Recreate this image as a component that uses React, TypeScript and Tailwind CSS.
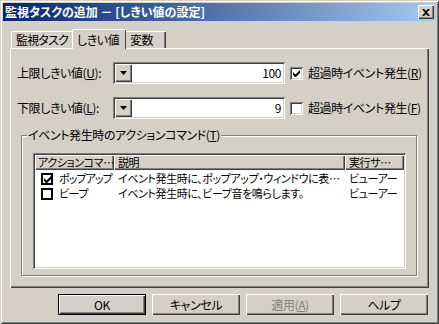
import React from 'react';

const FONT = { fontFamily: '"MS UI Gothic", "Noto Sans CJK JP", sans-serif' };

const raised = 'shadow-[inset_1px_1px_0_#ffffff,inset_-1px_-1px_0_#404040,inset_-2px_-2px_0_#808080]';
const sunken = 'shadow-[inset_1px_1px_0_#808080,inset_-1px_-1px_0_#ffffff,inset_2px_2px_0_#404040,inset_-2px_-2px_0_#d4d0c8]';

const Check: React.FC<{ checked?: boolean }> = ({ checked }) => (
  <div className={`w-[13px] h-[13px] bg-white shrink-0 relative ${sunken}`}>
    {checked && (
      <svg className="absolute left-[3px] top-[3px]" width="7" height="7" viewBox="0 0 7 7">
        <path d="M0 2v3l2 2h1l4-4V0L2.5 4.5z" fill="#000" />
      </svg>
    )}
  </div>
);

const ListCheck: React.FC<{ checked?: boolean }> = ({ checked }) => (
  <div className="w-[12px] h-[12px] bg-white border-2 border-black shrink-0 relative">
    {checked && (
      <svg className="absolute left-[1px] top-[1px]" width="7" height="7" viewBox="0 0 7 7">
        <path d="M0 2v3l2 2h1l4-4V0L2.5 4.5z" fill="#000" />
      </svg>
    )}
  </div>
);

const Combo: React.FC<{ value: string }> = ({ value }) => (
  <div className={`w-[172px] h-[22px] bg-white flex items-stretch p-[2px] shrink-0 ${sunken}`}>
    <div className={`w-[17px] bg-[#d4d0c8] flex items-center justify-center ${raised}`}>
      <svg width="7" height="4" viewBox="0 0 7 4"><path d="M0 0h7L3.5 4z" fill="#000" /></svg>
    </div>
    <div className="flex-1 text-right pr-[2px] leading-[18px] text-[12px]">{value}</div>
  </div>
);

const Btn: React.FC<{ label: React.ReactNode; def?: boolean; disabled?: boolean }> = ({ label, def, disabled }) => (
  <div className={`w-[88px] h-[21px] ${def ? 'border border-black' : ''}`}>
    <div
      className={`w-full h-full flex items-center justify-center text-[12px] ${raised} ${
        disabled ? 'text-[#808080]' : 'text-black'
      }`}
    >
      {label}
    </div>
  </div>
);

export default function App() {
  return (
    <div
      style={FONT}
      className="w-[439px] h-[324px] bg-[#d4d0c8] p-[3px] flex flex-col text-black whitespace-nowrap tracking-[-0.4px] [font-feature-settings:'palt'] shadow-[inset_1px_1px_0_#d4d0c8,inset_-1px_-1px_0_#404040,inset_2px_2px_0_#ffffff,inset_-2px_-2px_0_#808080]"
    >
      {/* Title bar */}
      <div className="h-[18px] bg-gradient-to-r from-[#0a246a] to-[#a6caf0] flex items-center justify-between pl-[2px] pr-[2px]">
        <span className="text-white font-bold text-[12px] leading-none tracking-normal">監視タスクの追加 － [しきい値の設定]</span>
        <div className={`w-[16px] h-[14px] bg-[#d4d0c8] flex items-center justify-center ${raised}`}>
          <svg width="8" height="7" viewBox="0 0 8 7">
            <path d="M0 0h2l2 2 2-2h2L5 3.5 8 7H6L4 5 2 7H0l3-3.5z" fill="#000" />
          </svg>
        </div>
      </div>

      {/* Tabs */}
      <div className="flex items-end h-[27px] pl-[8px] text-[12px]">
        <div className="h-[17px] w-[61px] pl-[4px] border-t border-l border-white rounded-tl-[2px] flex items-center tracking-[-0.8px]">
          監視タスク
        </div>
        <div className="h-[20px] w-[54px] -mb-[1px] border-t border-l border-white bg-[#d4d0c8] rounded-tl-[2px] flex items-center pl-[4px] shadow-[inset_-1px_0_0_#404040] relative z-10">
          しきい値
        </div>
        <div className="h-[17px] w-[40px] pl-[4px] border-t border-white flex items-center shadow-[inset_-1px_0_0_#404040,inset_-2px_0_0_#808080]">
          変数
        </div>
      </div>

      {/* Tab panel */}
      <div className="mx-[7px] h-[240px] border-t border-l border-white shadow-[inset_-1px_-1px_0_#404040,inset_-2px_-2px_0_#808080] text-[12px] flex flex-col">
        <div className="flex items-center mt-[13px] pl-[6px] h-[22px]">
          <span className="w-[96px]">上限しきい値(<u>U</u>):</span>
          <Combo value="100" />
          <div className="ml-[5px] flex items-center gap-[5px]">
            <Check checked />
            <span>超過時イベント発生(<u>R</u>)</span>
          </div>
        </div>
        <div className="flex items-center mt-[13px] pl-[6px] h-[22px]">
          <span className="w-[96px]">下限しきい値(<u>L</u>):</span>
          <Combo value="9" />
          <div className="ml-[5px] flex items-center gap-[5px]">
            <Check />
            <span>超過時イベント発生(<u>F</u>)</span>
          </div>
        </div>

        {/* Group box */}
        <div className="relative mt-[16px] ml-[10px] w-[396px] h-[141px] border border-[#808080] shadow-[inset_1px_1px_0_#ffffff,1px_1px_0_#ffffff]">
          <span className="absolute left-[5px] -top-[8px] bg-[#d4d0c8] px-[1px] leading-[14px]">
            イベント発生時のアクションコマンド(<u>T</u>)
          </span>
          <div className={`absolute left-[11px] top-[17px] w-[373px] h-[116px] bg-white p-[2px] text-[11px] ${sunken}`}>
            <div className="flex h-[15px]">
              <div className={`w-[79px] bg-[#d4d0c8] pl-[3px] leading-[15px] overflow-hidden ${raised}`}>
                アクションコマ…
              </div>
              <div className={`w-[231px] bg-[#d4d0c8] pl-[4px] leading-[15px] ${raised}`}>説明</div>
              <div className={`w-[59px] bg-[#d4d0c8] pl-[4px] leading-[15px] overflow-hidden ${raised}`}>実行サ…</div>
            </div>
            <div className="flex items-center h-[15px] mt-[1px]">
              <div className="w-[79px] flex items-center pl-[6px] gap-[6px] overflow-hidden">
                <ListCheck checked />
                <span className="tracking-[-0.9px]">ポップアップ</span>
              </div>
              <div className="w-[231px] pl-[4px] overflow-hidden">
                イベント発生時に、ポップアップ・ウィンドウに表…
              </div>
              <div className="w-[59px] pl-[4px] overflow-hidden">ビューアー</div>
            </div>
            <div className="flex items-center h-[15px]">
              <div className="w-[79px] flex items-center pl-[6px] gap-[6px] overflow-hidden">
                <ListCheck />
                <span>ビープ</span>
              </div>
              <div className="w-[231px] pl-[4px] overflow-hidden">
                イベント発生時に、ビープ音を鳴らします。
              </div>
              <div className="w-[59px] pl-[4px] overflow-hidden">ビューアー</div>
            </div>
          </div>
        </div>
      </div>

      {/* Buttons */}
      <div className="flex mt-[6px] pl-[55px] gap-[6px]">
        <Btn label="OK" def />
        <Btn label="キャンセル" />
        <Btn label={<span>適用(<u>A</u>)</span>} disabled />
        <Btn label="ヘルプ" />
      </div>
    </div>
  );
}
